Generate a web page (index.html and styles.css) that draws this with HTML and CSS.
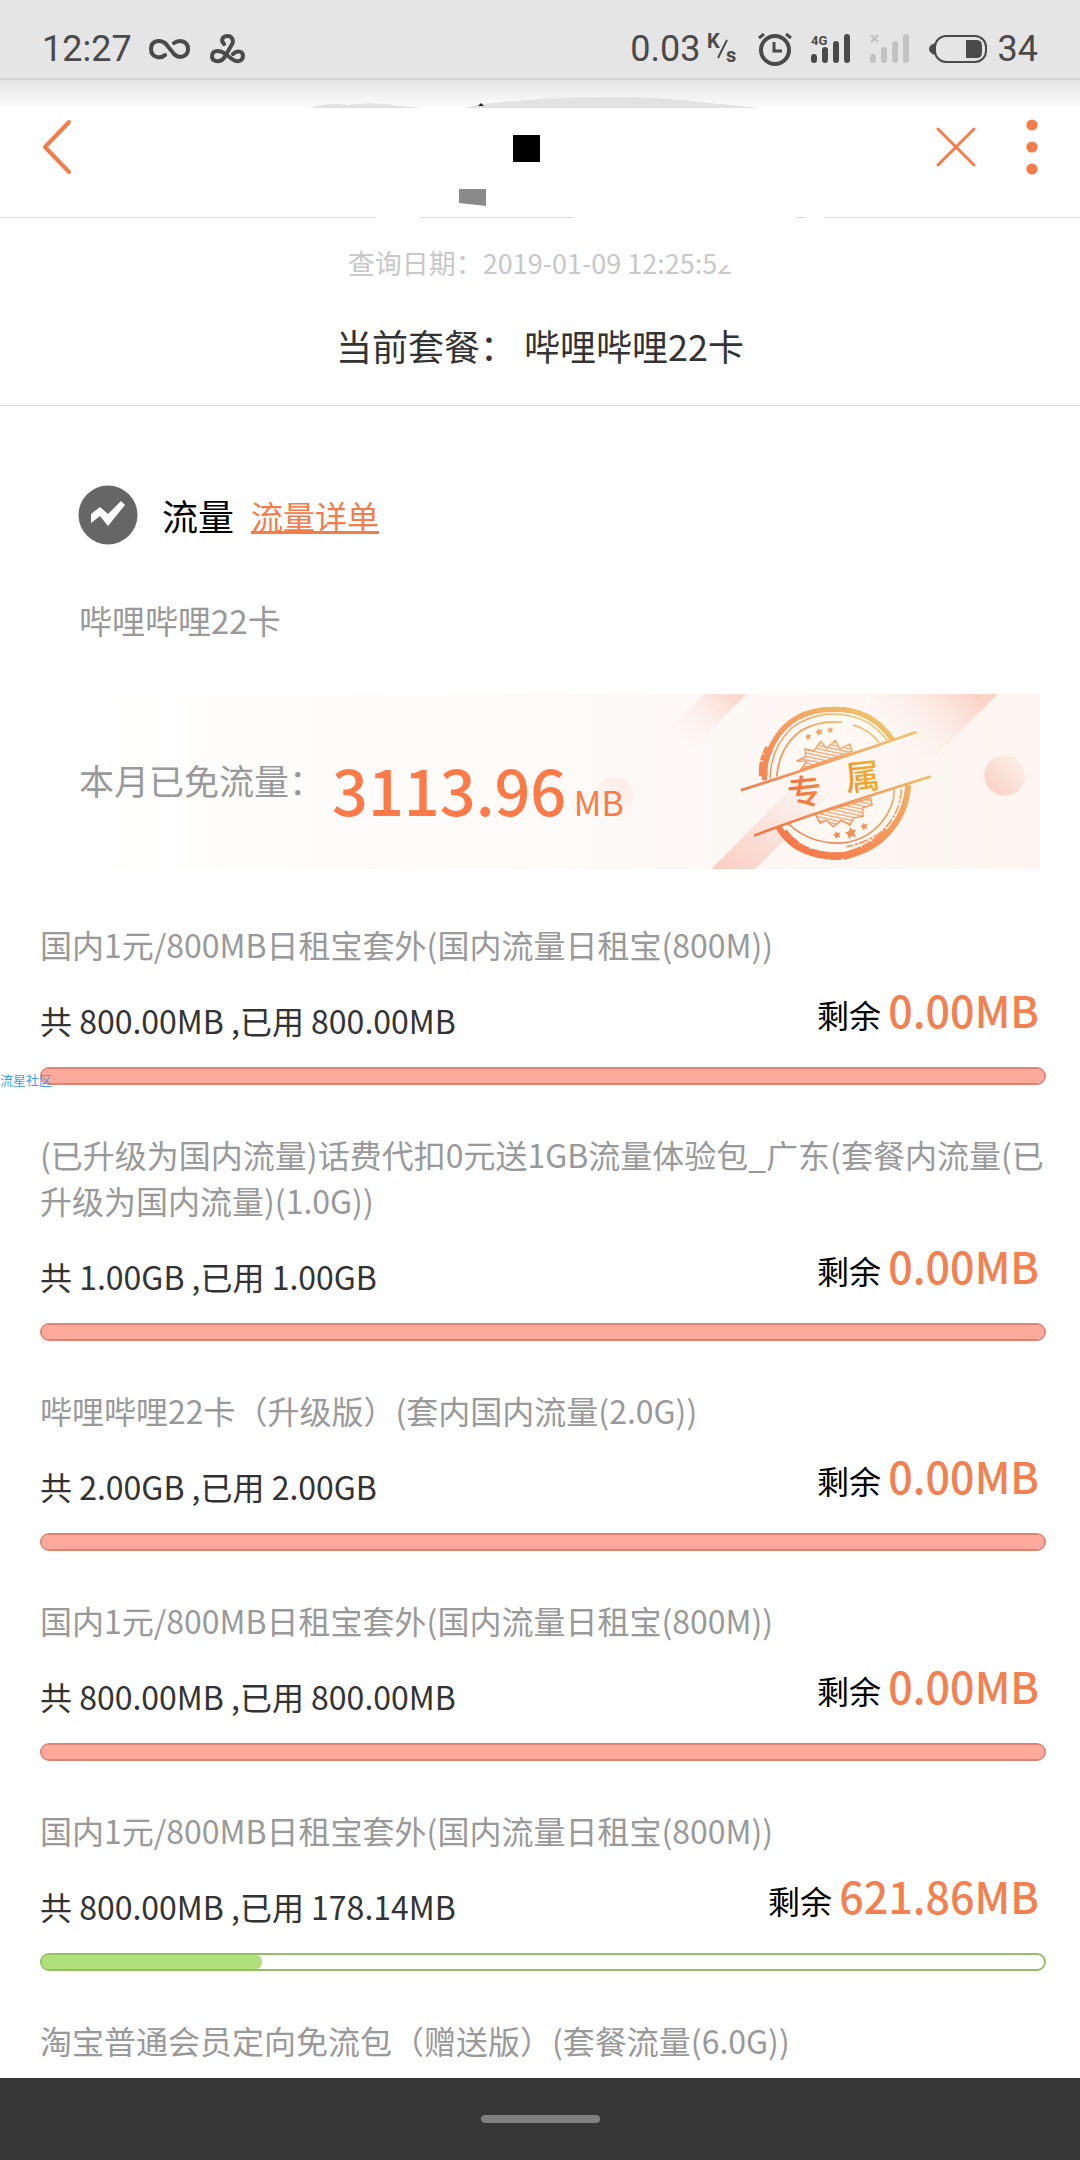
FILE: index.html
```html
<!DOCTYPE html>
<html lang="zh-CN">
<head>
<meta charset="utf-8">
<meta name="viewport" content="width=device-width, initial-scale=1">
<title>套餐余量查询</title>
<link rel="stylesheet" href="styles.css">
</head>
<body>
<div class="page">
  <div class="status">
    <div class="status-group">
      <span>12:27</span>
      <svg class="ic-inf" width="41" height="22" viewBox="0 0 41 22" fill="none" stroke="#4a4a4a" stroke-width="4" stroke-linecap="round"><path d="M16 17C12 21 2 20 2 11S12 1 17 6L25 16C30 21 39 19 39 11S30 1 25 5"/></svg>
      <svg class="ic-tre" width="35" height="30" viewBox="0 0 35 30" fill="none" stroke="#4a4a4a" stroke-width="4" stroke-linecap="round" stroke-linejoin="round"><path d="M14 10C10 6 13 2 17.500 2S25 7 21 12L14 24C10 29 2 28 2 22S9 16 14 19L22 25C27 29 33 27 33 22S27 16 23 20"/></svg>
    </div>
    <div class="status-group status-right">
      <span>0.03</span>
      <svg class="ic-speed" width="32" height="36" viewBox="0 0 32 36" fill="#4a4a4a"><text class="speed-text" x="0" y="17">K</text><text class="speed-text" x="19" y="31">s</text><path d="M11 27L20 9" stroke="#4a4a4a" stroke-width="2"/></svg>
      <svg class="ic-alarm" width="34" height="33" viewBox="0 0 34 33" fill="none" stroke="#4a4a4a" stroke-width="4"><circle cx="17" cy="17" r="14"/><path d="M16 9V18H24" stroke-width="3"/><path d="M1 5L6 1M33 5L28 1" stroke-width="3"/></svg>
      <svg class="ic-signal" width="40" height="30" viewBox="0 0 40 30" fill="#4a4a4a"><rect x="0" y="20" width="6" height="9" rx="3"/><rect x="11" y="13" width="6" height="16" rx="3"/><rect x="22" y="7" width="6" height="22" rx="3"/><rect x="33" y="0" width="6" height="29" rx="3"/><text class="net-text" x="0" y="11">4G</text></svg>
      <svg class="ic-signal" width="40" height="30" viewBox="0 0 40 30" fill="#c2c2c2"><rect x="0" y="20" width="6" height="9" rx="3"/><rect x="11" y="13" width="6" height="16" rx="3"/><rect x="22" y="7" width="6" height="22" rx="3"/><rect x="33" y="0" width="6" height="29" rx="3"/><path d="M1 1L8 8M8 1L1 8" stroke="#c2c2c2" stroke-width="2"/></svg>
      <svg class="ic-battery" width="58" height="28" viewBox="0 0 58 28"><path d="M6 8Q0 10 0 14T6 20Z" fill="#4a4a4a"/><rect x="6" y="1" width="51" height="26" rx="11" fill="none" stroke="#4a4a4a" stroke-width="2"/><path d="M37 5H48Q53 5 53 11V17Q53 23 48 23H37Z" fill="#4a4a4a"/></svg>
      <span>34</span>
    </div>
  </div>

  <header class="bar">
    <button class="icon-btn" aria-label="返回"><svg width="30" height="56" viewBox="0 0 30 56" fill="none" stroke="#f47b4a" stroke-width="4" stroke-linecap="round" stroke-linejoin="round"><path d="M27 3L3 28L27 53"/></svg></button>
    <svg class="smudge" viewBox="0 0 1080 139" preserveAspectRatio="xMidYMin slice" aria-hidden="true"><path d="M310 28Q326 22 348 25Q372 21 400 26L424 28Z" fill="#e2e2e2"/><path d="M465 28L482 24L540 19Q640 14 700 22L760 28Z" fill="#e2e2e2"/><path d="M478 26L481 23L484 26Z" fill="#222"/><path d="M513 55H540V82H513Z" fill="#000"/><path d="M459 109H486V126L459 123Z" fill="#8a8a8a"/><path d="M376 135H420V139H376ZM573 135H796V139H573ZM805 135H824V139H805Z" fill="#fff"/></svg>
    <div class="bar-actions">
      <button class="icon-btn" aria-label="关闭"><svg width="40" height="40" viewBox="0 0 40 40" fill="none" stroke="#f47b4a" stroke-width="3" stroke-linecap="round"><path d="M2 2L38 38M38 2L2 38"/></svg></button>
      <button class="icon-btn" aria-label="更多"><svg width="12" height="56" viewBox="0 0 12 56" fill="#f47b4a"><circle cx="6" cy="6" r="5.600"/><circle cx="6" cy="28" r="5.600"/><circle cx="6" cy="50" r="5.600"/></svg></button>
    </div>
  </header>

  <section class="plan">
    <p class="query-date">查询日期：2019-01-09 12:25:5<span class="half">2</span></p>
    <h1 class="plan-name">当前套餐： 哔哩哔哩22卡</h1>
  </section>

  <main>
    <div class="flow-head">
      <svg width="60" height="60" viewBox="0 0 60 60"><circle cx="30" cy="30" r="29.500" fill="#666"/><path d="M13 29L22 22L30 29L43 16L47 20L30 41L22 31L13 38Z" fill="#fff"/></svg>
      <h2>流量</h2>
      <a href="#detail">流量详单</a>
    </div>
    <p class="sub-name">哔哩哔哩22卡</p>

    <section class="banner">
      <svg class="banner-art" width="464" height="175" viewBox="-192 44 1392 526" aria-hidden="true">
        <defs>
          <linearGradient id="ink" x1="400" y1="480" x2="720" y2="120" gradientUnits="userSpaceOnUse"><stop offset="0" stop-color="#f47648"/><stop offset="0.550" stop-color="#f59a5e"/><stop offset="1" stop-color="#efc16a"/></linearGradient>
          <linearGradient id="char" x1="450" y1="0" x2="715" y2="0" gradientUnits="userSpaceOnUse"><stop offset="0" stop-color="#f47044"/><stop offset="1" stop-color="#f2ae28"/></linearGradient>
          <linearGradient id="b1" x1="270" y1="40" x2="130" y2="190" gradientUnits="userSpaceOnUse"><stop offset="0" stop-color="#fbd8cd"/><stop offset="1" stop-color="#fbf3ee" stop-opacity="0"/></linearGradient>
          <linearGradient id="b2" x1="1000" y1="40" x2="800" y2="240" gradientUnits="userSpaceOnUse"><stop offset="0" stop-color="#fad3c7"/><stop offset="1" stop-color="#fbf3ee" stop-opacity="0"/></linearGradient>
          <linearGradient id="b3" x1="260" y1="570" x2="460" y2="330" gradientUnits="userSpaceOnUse"><stop offset="0" stop-color="#fad0c5"/><stop offset="1" stop-color="#fbf1ec"/></linearGradient>
          <linearGradient id="dot" x1="1050" y1="330" x2="1140" y2="240" gradientUnits="userSpaceOnUse"><stop offset="0" stop-color="#fad3c7"/><stop offset="1" stop-color="#fbeee8"/></linearGradient>
          <linearGradient id="dot2" x1="-60" y1="400" x2="0" y2="300" gradientUnits="userSpaceOnUse"><stop offset="0" stop-color="#fdf6f2"/><stop offset="1" stop-color="#fde9e0"/></linearGradient>
          <pattern id="hatch" width="8" height="10" patternUnits="userSpaceOnUse" patternTransform="rotate(12)"><path d="M0 3H8" stroke="#f6a573" stroke-width="4"/></pattern>
        </defs>
        <circle cx="-78" cy="350" r="56" fill="url(#dot2)"/>
        <path d="M192 44H320L145 218L80 156Z" fill="url(#b1)"/>
        <path d="M686 44H1074L900 218Q850 250 800 200L686 90Z" fill="url(#b2)"/>
        <path d="M214 570L480 300L560 358L346 570Z" fill="url(#b3)"/>
        <circle cx="1095" cy="289" r="61" fill="url(#dot)"/>
        <path d="M367 303A222 222 0 0 1 765 179ZM412 442A222 222 0 0 0 810 316Z" fill="#fff9f3"/>
        <g fill="none" stroke="url(#ink)">
          <path d="M373 303Q370 240 400 190Q455 88 585 90Q695 88 758 182" stroke-width="16"/>
          <path d="M390 298Q392 205 455 146Q520 98 600 105Q690 112 742 184" stroke-width="4"/>
          <path d="M410 292Q418 200 485 153Q540 122 606 129M640 137Q690 152 718 190" stroke-width="5"/>
          <path d="M370 290Q366 245 388 207" stroke-width="26" stroke-dasharray="42 3 18 2"/>
          <path d="M415 443Q460 530 590 530Q690 525 745 460Q800 400 805 318" stroke-width="18"/>
          <path d="M445 434Q510 494 600 492Q675 488 725 430Q765 380 763 332" stroke-width="5"/>
          <path d="M785 330Q780 410 720 462Q675 492 620 503" stroke-width="5" stroke-dasharray="30 4 9 5"/>
          <path d="M430 458Q490 540 615 530Q690 512 745 456" stroke-width="23" stroke-dasharray="60 3 34 4"/>
          <path d="M302 333Q480 278 830 158M342 470Q500 408 873 292" stroke-width="8"/>
        </g>
        <path d="M482 271L500 246L470 246L497 232L495 209L522 215L542 186L560 207L586 183L600 209L630 194L637 216Z" fill="url(#hatch)" stroke="url(#ink)" stroke-width="4"/>
        <path d="M526 405L540 432L560 424L580 443L605 424L630 439L642 416L670 411L668 386L697 377L692 357Z" fill="url(#hatch)" stroke="url(#ink)" stroke-width="4"/>
        <g fill="url(#ink)"><path d="M500 162l5 5 8-2-3 8 4 6-8-1-5 5-1-8-5-5 7-2ZM533 146l6 6 9-2-4 8 4 7-9-1-5 6-2-9-7-4 8-3ZM566 142l5 5 8-2-3 8 4 6-8-1-5 5-1-8-5-5 7-2Z"/><path d="M587 456l5 6 9-2-4 8 4 7-9-1-5 6-2-9-6-4 7-3ZM631 444l6 9 13-1-8 10 7 12-14-3-8 9-3-13-9-5 12-6ZM669 430l5 6 9-2-4 8 4 7-9-1-5 6-2-9-6-4 7-3Z"/></g>
        <g fill="url(#char)" class="stamp-text"><text x="442" y="376" transform="rotate(-6 492 339)">专</text><text x="616" y="330" transform="rotate(-6 668 290)">属</text></g>
      </svg>
      <span class="banner-label">本月已免流量：</span>
      <span class="banner-value">3113.96<small> MB</small></span>
    </section>

    <ul class="packs">
      <li>
        <p class="name">国内1元/800MB日租宝套外(国内流量日租宝(800M))</p>
        <div class="usage"><span class="used">共 800.00MB ,已用 800.00MB</span><span class="left">剩余 <b>0.00MB</b></span></div>
        <div class="meter full"><div class="fill" style="width:100%"></div><span class="mark">流星社区</span></div>
      </li>
      <li>
        <p class="name">(已升级为国内流量)话费代扣0元送1GB流量体验包_广东(套餐内流量(已升级为国内流量)(1.0G))</p>
        <div class="usage"><span class="used">共 1.00GB ,已用 1.00GB</span><span class="left">剩余 <b>0.00MB</b></span></div>
        <div class="meter full"><div class="fill" style="width:100%"></div></div>
      </li>
      <li>
        <p class="name">哔哩哔哩22卡（升级版）(套内国内流量(2.0G))</p>
        <div class="usage"><span class="used">共 2.00GB ,已用 2.00GB</span><span class="left">剩余 <b>0.00MB</b></span></div>
        <div class="meter full"><div class="fill" style="width:100%"></div></div>
      </li>
      <li>
        <p class="name">国内1元/800MB日租宝套外(国内流量日租宝(800M))</p>
        <div class="usage"><span class="used">共 800.00MB ,已用 800.00MB</span><span class="left">剩余 <b>0.00MB</b></span></div>
        <div class="meter full"><div class="fill" style="width:100%"></div></div>
      </li>
      <li>
        <p class="name">国内1元/800MB日租宝套外(国内流量日租宝(800M))</p>
        <div class="usage"><span class="used">共 800.00MB ,已用 178.14MB</span><span class="left">剩余 <b>621.86MB</b></span></div>
        <div class="meter"><div class="fill" style="width:22%"></div></div>
      </li>
      <li>
        <p class="name">淘宝普通会员定向免流包（赠送版）(套餐流量(6.0G))</p>
      </li>
    </ul>
  </main>

  <nav class="home"><button aria-label="主屏幕"></button></nav>
</div>
</body>
</html>
```
FILE: styles.css
```css
* { box-sizing: border-box; margin: 0; padding: 0; }
body { background: #fff; color: #333; font-family: "Noto Sans CJK SC", sans-serif; }
.page { display: flex; flex-direction: column; min-height: 100vh; }
svg { display: block; flex: none; }
button { border: 0; background: none; cursor: pointer; }

.status { display: flex; justify-content: space-between; height: 80px; padding: 18px 42px 0 42px; background: #e5e5e5; border-bottom: 2px solid #d3d3d3; font: 36px/60px Roboto, sans-serif; color: #4a4a4a; }
.status-group { display: flex; align-items: center; height: 62px; }
.ic-inf { margin-left: 17px; }
.ic-tre { margin-left: 20px; }
.ic-speed { margin-left: 6px; overflow: visible; }
.ic-alarm, .ic-signal, .ic-battery { margin-left: 19px; }
.ic-battery { margin-right: 11px; }
.speed-text { font: 700 20px/24px Roboto, sans-serif; }
.net-text { font: 700 13px Roboto, sans-serif; }

.bar { position: relative; display: flex; align-items: center; justify-content: space-between; height: 138px; padding: 0 42px 3px; border-bottom: 1px solid #dcdcdc; background: linear-gradient(#e4e4e4, #fbfbfb 26px, #fff 28px); }
.smudge { position: absolute; left: 0; top: 0; width: 100%; height: 139px; pointer-events: none; }
.icon-btn { display: block; position: relative; z-index: 1; }
.bar-actions { display: flex; align-items: center; gap: 50px; }

.plan { padding: 25px 0 33px; border-bottom: 1px solid #dcdcdc; text-align: center; }
.query-date { font-size: 27px; line-height: 40px; color: #c8c8c8; }
.half { display: inline-block; clip-path: inset(55% 0 0 0); }
.plan-name { margin-top: 35px; font-size: 36px; line-height: 54px; font-weight: 400; white-space: pre-wrap; }

.flow-head { display: flex; align-items: center; margin: 79px 78px 0; }
.flow-head h2 { margin-left: 24px; font-size: 36px; line-height: 54px; font-weight: 400; color: #000; }
.flow-head a { margin-left: 17px; font-size: 32px; line-height: 46px; color: #f47b4a; text-decoration: underline; }
.sub-name { margin: 51px 79px 0; font-size: 33px; line-height: 48px; color: #999; }

.banner { position: relative; display: flex; align-items: flex-start; gap: 8px; height: 175px; margin: 50px 40px 0; padding: 60px 0 0 39px; background: linear-gradient(90deg, #fff, #fdf9f6 60%, #fcf5f0); }
.banner-art { position: absolute; right: 0; top: 0; }
.banner-label { position: relative; font-size: 35px; line-height: 52px; color: #999; }
.banner-value { position: relative; font-size: 63px; line-height: 70px; font-weight: 500; color: #fb7a48; }
.banner-value small { font-size: 34px; font-weight: 400; }
.stamp-text { font: 500 104px "Noto Sans CJK SC", sans-serif; }

.packs { list-style: none; padding: 6px 0 10px; margin: 0 34px 0 40px; }
.packs li { padding-top: 46px; }
.name { font-size: 32px; line-height: 46px; color: #999; }
.usage { display: flex; justify-content: space-between; height: 60px; margin: 16px 7px 0 0; }
.used { align-self: flex-end; font-size: 32px; line-height: 46px; }
.left { font-size: 32px; line-height: 52px; color: #000; }
.left b { font-size: 43px; line-height: 52px; font-weight: 500; color: #f28050; }
.meter { position: relative; height: 18px; margin-top: 24px; border: 2px solid #93bf60; border-radius: 9px; }
.fill { height: 100%; border-radius: 6px; background: #b0e07a; }
.full { border-color: #e08272; }
.full .fill { background: #fda99b; }
.mark { position: absolute; left: -42px; top: 3px; font-size: 13px; line-height: 16px; color: #3f9fe8; }

.home { display: flex; align-items: center; justify-content: center; height: 82px; margin-top: auto; background: #373737; }
.home button { width: 119px; height: 8px; border-radius: 4px; background: #808080; }
```
